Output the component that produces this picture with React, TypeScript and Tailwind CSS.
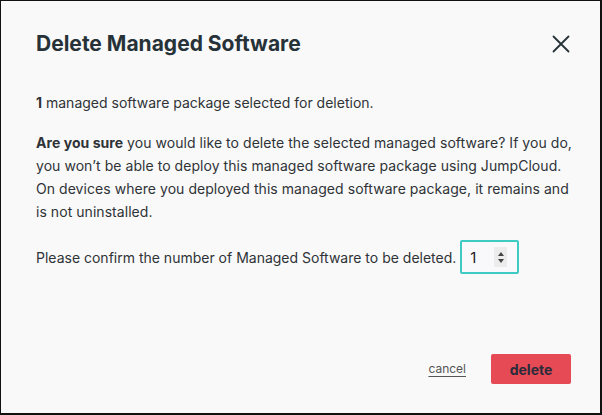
import React, { useState } from 'react';

export default function App() {
  const [count, setCount] = useState(1);

  return (
    <div className="w-[602px] h-[415px] bg-[#f9f9f9] border-t border-l border-r-2 border-b-2 border-[#111] flex flex-col font-[Inter] text-[#2f3337]">
      {/* Header */}
      <div className="flex items-center justify-between pl-[35px] pr-[29px] pt-[24px] h-[62px]">
        <h2 className="text-[21px] font-bold text-[#263238]">Delete Managed Software</h2>
        <button className="w-[20px] h-[20px] flex items-center justify-center text-[#263238]">
          <svg width="18" height="18" viewBox="0 0 18 18" fill="none" stroke="currentColor" strokeWidth="1.8" strokeLinecap="round">
            <path d="M1.5 1.5 L16.5 16.5 M16.5 1.5 L1.5 16.5" />
          </svg>
        </button>
      </div>

      {/* Body */}
      <div className="flex-1 pl-[35px] pr-[20px] pt-[28px] text-[14px] leading-[23px]">
        <p>
          <span className="font-bold">1</span> managed software package selected for deletion.
        </p>
        <p className="mt-[17px] tracking-[0.05px]">
          <span className="font-bold">Are you sure</span> you would like to delete the selected managed software? If you do,<br />
          you won’t be able to deploy this managed software package using JumpCloud.<br />
          On devices where you deployed this managed software package, it remains and<br />
          is not uninstalled.
        </p>
        <div className="mt-[17px] flex items-center gap-[4px]">
          <span>Please confirm the number of Managed Software to be deleted.</span>
          <div className="w-[59px] h-[34px] border-2 border-[#3ecbc4] rounded-[2px] bg-[#f9f9fb] flex items-center justify-between pl-[8px] pr-[10px]">
            <span className="text-[15px] text-[#222]">{count}</span>
            <div className="w-[13px] h-[20px] bg-[#ececec] flex flex-col items-center justify-center gap-[3px]">
              <button onClick={() => setCount(count + 1)} className="w-0 h-0 border-l-[3.5px] border-r-[3.5px] border-b-[4px] border-l-transparent border-r-transparent border-b-[#444]" />
              <button onClick={() => setCount(Math.max(1, count - 1))} className="w-0 h-0 border-l-[3.5px] border-r-[3.5px] border-t-[4px] border-l-transparent border-r-transparent border-t-[#444]" />
            </div>
          </div>
        </div>
      </div>

      {/* Footer */}
      <div className="flex items-center justify-end gap-[25px] pr-[29px] pb-[29px]">
        <button className="text-[12px] text-[#555] underline underline-offset-[3px]">cancel</button>
        <button className="w-[80px] h-[30px] rounded-[2px] bg-[#e64a55] text-[14px] font-bold text-[#2b2b3a]">delete</button>
      </div>
    </div>
  );
}
